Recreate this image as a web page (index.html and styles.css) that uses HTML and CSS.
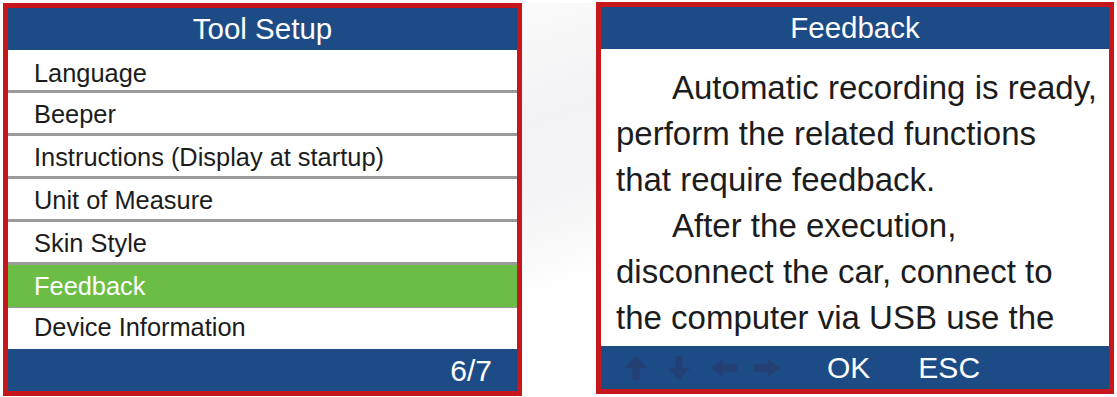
FILE: index.html
```html
<!DOCTYPE html>
<html lang="en">

<head>
    <meta charset="UTF-8">
    <meta name="viewport" content="width=device-width, initial-scale=1.0">
    <title>Tool Setup / Feedback</title>
    <link rel="stylesheet" href="styles.css">
</head>

<body>
    <div class="screens">
        <div class="screen screen-left">
            <div class="screen-title">Tool Setup</div>
            <ul class="menu">
                <li>Language</li>
                <li>Beeper</li>
                <li>Instructions (Display at startup)</li>
                <li>Unit of Measure</li>
                <li>Skin Style</li>
                <li class="selected">Feedback</li>
                <li>Device Information</li>
            </ul>
            <div class="screen-footer page-count">6/7</div>
        </div>

        <div class="watermark"></div>

        <div class="screen screen-right">
            <div class="screen-title">Feedback</div>
            <div class="message">
                <p>Automatic recording is ready,<br>perform the related functions<br>that require feedback.</p>
                <p>After the execution,<br>disconnect the car, connect to<br>the computer via USB use the</p>
            </div>
            <div class="screen-footer keys">
                <svg class="key-arrow vertical" viewBox="0 0 22 26">
                    <path d="M11 1 L22 13 L14.5 13 L14.5 25 L7.5 25 L7.5 13 L0 13 Z" />
                </svg>
                <svg class="key-arrow vertical" viewBox="0 0 22 26">
                    <path d="M11 25 L22 13 L14.5 13 L14.5 1 L7.5 1 L7.5 13 L0 13 Z" />
                </svg>
                <svg class="key-arrow horizontal" viewBox="0 0 26 18">
                    <path d="M0 9 L12 0 L12 5.5 L26 5.5 L26 12.5 L12 12.5 L12 18 Z" />
                </svg>
                <svg class="key-arrow horizontal" viewBox="0 0 26 18">
                    <path d="M26 9 L14 0 L14 5.5 L0 5.5 L0 12.5 L14 12.5 L14 18 Z" />
                </svg>
                <span class="key-label key-ok">OK</span>
                <span class="key-label key-esc">ESC</span>
            </div>
        </div>
    </div>
</body>

</html>
```

FILE: styles.css
```css
body {
    margin: 0;
    padding: 0;
    background-color: #ffffff;
    font-family: "Liberation Sans", Arial, sans-serif;
}

.screens {
    display: flex;
    align-items: flex-start;
    padding: 3px 0 0 3px;
}

.screen {
    display: flex;
    flex-direction: column;
    height: 393px;
    box-sizing: border-box;
    border: 5px solid #c8161d;
    background-color: #ffffff;
    overflow: hidden;
}

.screen-left {
    width: 519px;
}

.screen-right {
    width: 518px;
    height: 392px;
    margin-top: -1px;
}

.watermark {
    width: 74px;
    height: 380px;
    background: linear-gradient(160deg, #fbfbfc 0%, #f2f2f4 30%, #f4f4f6 50%, #ffffff 75%);
}

.screen-title {
    height: 42px;
    line-height: 42px;
    background-color: #1c4b86;
    color: #ffffff;
    text-align: center;
    font-size: 29.5px;
}

.menu {
    list-style: none;
    margin: 0;
    padding: 0;
    flex: 1;
}

.menu li {
    height: 43px;
    box-sizing: border-box;
    padding: 5px 0 0 26px;
    line-height: 33px;
    font-size: 25.4px;
    color: #1c1c1c;
    border-bottom: 3px solid #9b9b9b;
    white-space: nowrap;
}

.menu li:first-child {
    padding-top: 7px;
}

.menu li.selected {
    background-color: #6bbd45;
    color: #ffffff;
    border-bottom: 1px solid #9b9b9b;
}

.menu li:last-child {
    height: 41px;
    padding-top: 3px;
    border-bottom: none;
}

.screen-footer {
    height: 43px;
    line-height: 43px;
    background-color: #1c4b86;
    color: #ffffff;
    font-size: 30px;
}

.page-count {
    text-align: right;
    padding-right: 25px;
}

.message {
    flex: 1;
    overflow: hidden;
    padding: 16px 0 0 15px;
    font-size: 33px;
    line-height: 46px;
    color: #1c1c1c;
    white-space: nowrap;
}

.message p {
    margin: 0;
    text-indent: 56px;
}

.keys {
    display: flex;
    align-items: center;
    padding-left: 24px;
}

.key-arrow {
    fill: #243f73;
}

.key-arrow.vertical {
    width: 22px;
    height: 26px;
    margin-right: 21px;
}

.key-arrow.horizontal {
    width: 26px;
    height: 18px;
    margin-right: 17px;
}

.key-ok {
    margin-left: 30px;
}

.key-esc {
    margin-left: 48px;
}
```
